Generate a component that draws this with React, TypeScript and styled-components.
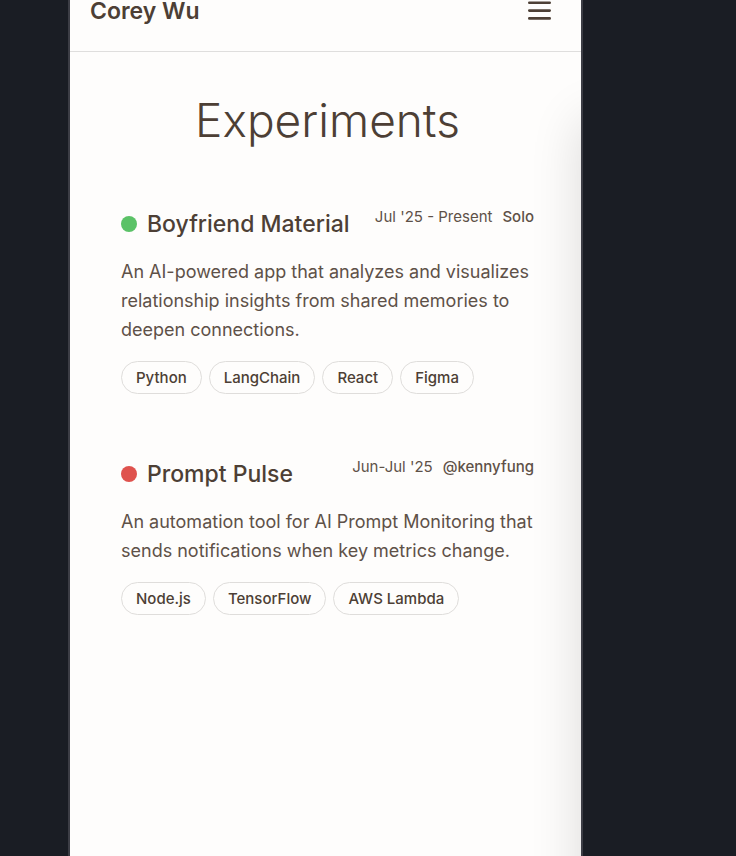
import styled, { createGlobalStyle } from "styled-components";

const GlobalStyle = createGlobalStyle`
  * { box-sizing: border-box; }
  body {
    margin: 0;
    background: #1a1d24;
    color: #4d3f35;
    font-family: Inter, "Liberation Sans", sans-serif;
  }
`;

const Stage = styled.div`
  display: flex;
  min-height: 100vh;
  padding: 0 153px 0 68px;
`;

const Device = styled.div`
  position: relative;
  flex: 1;
  min-width: 0;
  overflow: hidden;
  background: #fefdfc;
  border: solid #3c3d45;
  border-width: 0 2px;
`;

const DrawerShadow = styled.div`
  position: absolute;
  top: 120px;
  bottom: -80px;
  left: 100%;
  width: 240px;
  box-shadow: 0 0 48px rgba(0, 0, 0, 0.14);
  pointer-events: none;
`;

const Header = styled.header`
  display: flex;
  align-items: center;
  justify-content: space-between;
  padding: 0 30px 29px 20px;
  border-bottom: 1px solid #dfdedd;
`;

const Brand = styled.a`
  color: inherit;
  font-size: 23px;
  font-weight: 600;
  line-height: 22px;
  text-decoration: none;
`;

const MenuButton = styled.button`
  display: flex;
  padding: 0;
  border: 0;
  background: none;
  color: inherit;
  cursor: pointer;
`;

const Main = styled.main`
  padding: 40px 47px 0 51px;
`;

const PageTitle = styled.h1`
  margin: 0 0 52px;
  font-size: 46px;
  font-weight: 300;
  line-height: 56px;
  text-align: center;
`;

const Project = styled.article`
  margin-bottom: 56px;
`;

const ProjectHead = styled.div`
  display: flex;
  align-items: flex-start;
  justify-content: space-between;
  margin-bottom: 16px;
`;

const ProjectTitle = styled.h2`
  display: flex;
  align-items: center;
  gap: 10px;
  margin: 0;
  padding-top: 7px;
  font-size: 23px;
  font-weight: 500;
  line-height: 34px;
  white-space: nowrap;
`;

const Status = styled.span<{ $color: string }>`
  width: 16px;
  height: 16px;
  border-radius: 50%;
  background: ${(p) => p.$color};
`;

const Meta = styled.div`
  display: flex;
  gap: 10px;
  padding-top: 6px;
  font-size: 15px;
  line-height: 22px;
  color: #5e5148;
  white-space: nowrap;
`;

const Team = styled.span`
  font-weight: 500;
`;

const Description = styled.p`
  margin: 0 0 17px;
  font-size: 18px;
  line-height: 29px;
  color: #5e5148;
`;

const Tags = styled.ul`
  display: flex;
  flex-wrap: wrap;
  gap: 7px;
  margin: 0;
  padding: 0;
  list-style: none;
`;

const Tag = styled.li`
  padding: 0 14px;
  border: 1px solid #dfdddb;
  border-radius: 17px;
  font-size: 15px;
  font-weight: 500;
  line-height: 31px;
`;

const projects = [
  {
    name: "Boyfriend Material",
    color: "#5bc267",
    date: "Jul '25 - Present",
    team: "Solo",
    text: "An AI-powered app that analyzes and visualizes relationship insights from shared memories to deepen connections.",
    tags: ["Python", "LangChain", "React", "Figma"],
  },
  {
    name: "Prompt Pulse",
    color: "#df524d",
    date: "Jun-Jul '25",
    team: "@kennyfung",
    text: "An automation tool for AI Prompt Monitoring that sends notifications when key metrics change.",
    tags: ["Node.js", "TensorFlow", "AWS Lambda"],
  },
];

export default function App() {
  return (
    <Stage>
      <GlobalStyle />
      <Device>
        <Header>
          <Brand href="#">Corey Wu</Brand>
          <MenuButton type="button" aria-label="Open menu">
            <svg width="23" height="20" viewBox="0 0 23 20" fill="none" stroke="currentColor" strokeWidth="2.6" strokeLinecap="round">
              <path d="M1.3 1.8h20.4M1.3 9.6h20.4M1.3 17.4h20.4" />
            </svg>
          </MenuButton>
        </Header>
        <Main>
          <PageTitle>Experiments</PageTitle>
          {projects.map((p) => (
            <Project key={p.name}>
              <ProjectHead>
                <ProjectTitle>
                  <Status $color={p.color} />
                  {p.name}
                </ProjectTitle>
                <Meta>
                  <span>{p.date}</span>
                  <Team>{p.team}</Team>
                </Meta>
              </ProjectHead>
              <Description>{p.text}</Description>
              <Tags>
                {p.tags.map((t) => (
                  <Tag key={t}>{t}</Tag>
                ))}
              </Tags>
            </Project>
          ))}
        </Main>
        <DrawerShadow />
      </Device>
    </Stage>
  );
}
